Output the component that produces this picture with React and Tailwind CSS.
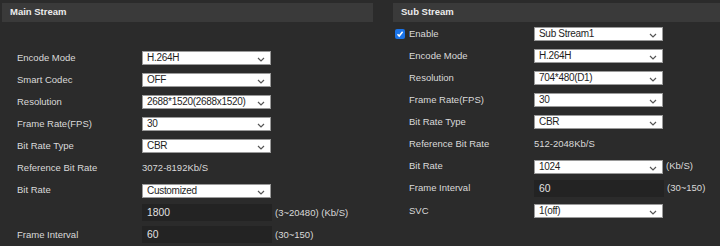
const font = { fontFamily: '"Liberation Sans", Arial, sans-serif' };

function Chevron() {
  return (
    <svg width="8" height="5" viewBox="0 0 8 5" className="absolute right-[5px] top-[5px]">
      <polyline points="1,1 4,4 7,1" fill="none" stroke="#555" strokeWidth="1.2" />
    </svg>
  );
}

function Select({ value }) {
  return (
    <div className="relative h-[14px] w-[129px] border border-[#9a9a9a] bg-white pl-[4px] text-[10px] leading-[12px] tracking-[-0.3px] text-[#1e1e1e]">
      {value}
      <Chevron />
    </div>
  );
}

function Input({ value }) {
  return (
    <div className="h-[17px] w-[130px] bg-[#232323] pl-[5px] text-[10.3px] leading-[17px] text-[#e2e2e2]">
      {value}
    </div>
  );
}

function Row({ label, children, unit }) {
  return (
    <div className="flex h-[22.1px] items-center">
      <div className="w-[125px] shrink-0 text-[9.5px] text-[#dadada]">{label}</div>
      {children}
      {unit && <span className="ml-[3px] text-[9.5px] text-[#dadada]">{unit}</span>}
    </div>
  );
}

function Header({ title }) {
  return (
    <div className="flex h-[19px] items-center bg-[#3a3a3a] pl-[8px] text-[9.5px] font-bold text-[#ececec]">
      {title}
    </div>
  );
}

export default function App() {
  return (
    <div style={font} className="flex h-[246px] w-[720px] overflow-hidden bg-[#2b2b2b] pt-[3px]">
      {/* Main Stream */}
      <div className="ml-[2px] w-[371px] shrink-0">
        <Header title="Main Stream" />
        <div className="mt-[25px] pl-[15px]">
          <Row label="Encode Mode"><Select value="H.264H" /></Row>
          <Row label="Smart Codec"><Select value="OFF" /></Row>
          <Row label="Resolution"><Select value="2688*1520(2688x1520)" /></Row>
          <Row label="Frame Rate(FPS)"><Select value="30" /></Row>
          <Row label="Bit Rate Type"><Select value="CBR" /></Row>
          <Row label="Reference Bit Rate">
            <span className="text-[9.5px] text-[#dadada]">3072-8192Kb/S</span>
          </Row>
          <Row label="Bit Rate"><Select value="Customized" /></Row>
          <Row label="" unit="(3~20480) (Kb/S)"><Input value="1800" /></Row>
          <Row label="Frame Interval" unit="(30~150)"><Input value="60" /></Row>
        </div>
      </div>

      {/* Sub Stream */}
      <div className="ml-[20px] flex-1">
        <Header title="Sub Stream" />
        <div className="pl-[2px] pt-[1px]">
          <div className="flex h-[22px] items-center">
            <div className="mr-[4px] flex h-[10px] w-[10px] items-center justify-center rounded-[2px] bg-[#1a73e8]">
              <svg width="8" height="8" viewBox="0 0 8 8">
                <polyline points="1.5,4.2 3.2,6 6.6,1.8" fill="none" stroke="white" strokeWidth="1.5" />
              </svg>
            </div>
            <div className="w-[125px] shrink-0 text-[9.5px] text-[#dadada]">Enable</div>
            <Select value="Sub Stream1" />
          </div>
          <div className="pl-[14px]">
            <Row label="Encode Mode"><Select value="H.264H" /></Row>
            <Row label="Resolution"><Select value="704*480(D1)" /></Row>
            <Row label="Frame Rate(FPS)"><Select value="30" /></Row>
            <Row label="Bit Rate Type"><Select value="CBR" /></Row>
            <Row label="Reference Bit Rate">
              <span className="text-[9.5px] text-[#dadada]">512-2048Kb/S</span>
            </Row>
            <Row label="Bit Rate" unit="(Kb/S)"><Select value="1024" /></Row>
            <Row label="Frame Interval" unit="(30~150)"><Input value="60" /></Row>
            <Row label="SVC"><Select value="1(off)" /></Row>
          </div>
        </div>
      </div>
    </div>
  );
}
